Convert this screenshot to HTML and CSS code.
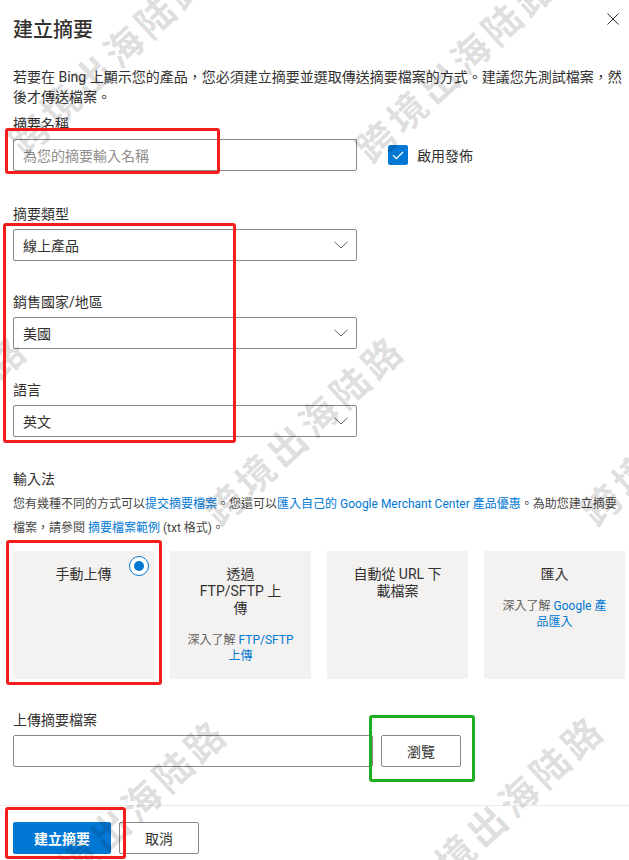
FILE: index.html
```html
<!DOCTYPE html>
<html lang="zh-Hant">
<head>
<meta charset="utf-8">
<title>建立摘要</title>
<link rel="stylesheet" href="styles.css">
</head>
<body>
<div class="dialog">
  <div class="content">
    <header class="header">
      <h1 class="title">建立摘要</h1>
      <button class="close" aria-label="關閉">
        <svg width="12" height="12" viewBox="0 0 12 12"><path d="M0.5 0.5 L11.5 11.5 M11.5 0.5 L0.5 11.5" stroke="#323130" stroke-width="1" fill="none"/></svg>
      </button>
    </header>

    <p class="intro">若要在 Bing 上顯示您的產品，您必須建立摘要並選取傳送摘要檔案的方式。建議您先測試檔案，然後才傳送檔案。</p>

    <div class="field field-name">
      <span class="label">摘要名稱</span>
      <div class="name-row">
        <div class="input name-input"><span class="placeholder">為您的摘要輸入名稱</span></div>
        <div class="check">
          <span class="checkbox"><svg width="20" height="20" viewBox="0 0 20 20"><path d="M5 10.2 L8.4 13.6 L15 7" stroke="#fff" stroke-width="1.3" fill="none"/></svg></span>
          <span class="check-text">啟用發佈</span>
        </div>
      </div>
    </div>

    <div class="field field-first">
      <span class="label">摘要類型</span>
      <div class="input select"><span>線上產品</span><svg class="chev" width="14" height="8" viewBox="0 0 14 8"><path d="M0.5 0.8 L7 7 L13.5 0.8" stroke="#605e5c" stroke-width="1" fill="none"/></svg></div>
    </div>

    <div class="field field-next">
      <span class="label">銷售國家/地區</span>
      <div class="input select"><span>美國</span><svg class="chev" width="14" height="8" viewBox="0 0 14 8"><path d="M0.5 0.8 L7 7 L13.5 0.8" stroke="#605e5c" stroke-width="1" fill="none"/></svg></div>
    </div>

    <div class="field field-next">
      <span class="label">語言</span>
      <div class="input select"><span>英文</span><svg class="chev" width="14" height="8" viewBox="0 0 14 8"><path d="M0.5 0.8 L7 7 L13.5 0.8" stroke="#605e5c" stroke-width="1" fill="none"/></svg></div>
    </div>

    <div class="field field-method">
      <span class="label label-method">輸入法</span>
      <p class="method-desc">您有幾種不同的方式可以<a href="#">提交摘要檔案</a>。您還可以<a href="#">匯入自己的 Google Merchant Center 產品優惠</a>。為助您建立摘要檔案，請參閱 <a href="#">摘要檔案範例</a> (txt 格式)。</p>
      <div class="cards">
        <div class="card">
          <div class="card-title">手動上傳</div>
          <span class="radio"><span class="radio-dot"></span></span>
        </div>
        <div class="card">
          <div class="card-title">透過<br>FTP/SFTP 上<br>傳</div>
          <div class="card-link">深入了解 <a href="#">FTP/SFTP<br>上傳</a></div>
        </div>
        <div class="card">
          <div class="card-title">自動從 URL 下<br>載檔案</div>
        </div>
        <div class="card">
          <div class="card-title">匯入</div>
          <div class="card-link">深入了解 <a href="#">Google 產<br>品匯入</a></div>
        </div>
      </div>
    </div>

    <div class="field field-upload">
      <span class="label">上傳摘要檔案</span>
      <div class="upload-row">
        <div class="input upload-input"></div>
        <button class="btn">瀏覽</button>
      </div>
    </div>
  </div>

  <footer class="footer">
    <button class="btn btn-primary">建立摘要</button>
    <button class="btn">取消</button>
  </footer>

  <div class="watermarks" aria-hidden="true">
    <span class="wm wm-1">跨境出海陆路</span>
    <span class="wm wm-2">跨境出海陆路</span>
    <span class="wm wm-3">跨境出海陆路</span>
    <span class="wm wm-4">跨境出海陆路</span>
    <span class="wm wm-5">跨境出海陆路</span>
    <span class="wm wm-6">跨境出海陆路</span>
    <span class="wm wm-7">跨境出海陆路</span>
  </div>

  <div class="note note-red note-1"></div>
  <div class="note note-red note-2"></div>
  <div class="note note-red note-3"></div>
  <div class="note note-green note-4"></div>
  <div class="note note-red note-5"></div>
</div>
</body>
</html>
```
FILE: styles.css
```css
* { box-sizing: border-box; }

html, body {
  margin: 0;
  padding: 0;
  background: #ffffff;
}

body {
  font-family: "Segoe UI", Roboto, "Noto Sans CJK TC", sans-serif;
  font-size: 14px;
  color: #323130;
}

.dialog {
  position: relative;
  width: 629px;
  height: 860px;
  overflow: hidden;
  background: #ffffff;
}

.content {
  padding: 0 4px 0 13px;
}

.header {
  display: flex;
  justify-content: space-between;
  align-items: flex-start;
  padding-top: 13px;
}

.title {
  margin: 3px 0 0;
  font-size: 20px;
  line-height: 28px;
  font-weight: 500;
}

.close {
  display: block;
  width: 12px;
  height: 12px;
  margin: 0 6px 0 0;
  padding: 0;
  border: 0;
  background: none;
}

.close svg { display: block; }

.intro {
  margin: 23px -4px 0 0;
  line-height: 20px;
}

.field-name { margin-top: 2px; }
.field-first { margin-top: 28px; }
.field-next { margin-top: 26px; }
.field-method { margin-top: 27px; }
.field-upload { margin-top: 26px; }

.label {
  display: block;
  padding: 5px 0;
  line-height: 20px;
}

.label-method { padding-bottom: 0; }

.input {
  display: flex;
  align-items: center;
  height: 32px;
  padding: 0 8px 0 9px;
  border: 1px solid #8a8886;
  border-radius: 2px;
  background: #ffffff;
}

.placeholder { color: #8f8d8b; }

.name-row {
  display: flex;
  align-items: center;
}

.name-input { width: 344px; }

.check {
  display: flex;
  align-items: center;
  gap: 9px;
  margin-left: 31px;
}

.checkbox {
  display: block;
  width: 20px;
  height: 20px;
  border-radius: 2px;
  background: #0078d4;
}

.checkbox svg { display: block; }

.select {
  width: 344px;
  justify-content: space-between;
}

.chev { display: block; }

.method-desc {
  margin: 3px 0 0;
  font-size: 12px;
  line-height: 24px;
  color: #484644;
}

a {
  color: #0078d4;
  text-decoration: none;
}

.cards {
  display: grid;
  grid-template-columns: repeat(4, 1fr);
  gap: 16px;
  margin-top: 11px;
}

.card {
  position: relative;
  height: 128px;
  padding: 15px 4px 0;
  background: #f3f2f1;
  text-align: center;
}

.card-title {
  line-height: 17px;
  white-space: nowrap;
}

.card-link {
  margin-top: 15px;
  font-size: 12px;
  line-height: 16px;
  color: #605e5c;
  white-space: nowrap;
}

.radio {
  position: absolute;
  top: 5px;
  right: 5px;
  display: flex;
  align-items: center;
  justify-content: center;
  width: 20px;
  height: 20px;
  border: 1.5px solid #0078d4;
  border-radius: 50%;
  background: #ffffff;
}

.radio-dot {
  width: 10px;
  height: 10px;
  border-radius: 50%;
  background: #0078d4;
}

.upload-row {
  display: flex;
  gap: 8px;
}

.upload-input { width: 360px; }

.btn {
  height: 32px;
  min-width: 80px;
  padding: 0 20px;
  border: 1px solid #8a8886;
  border-radius: 2px;
  background: #ffffff;
  color: #323130;
  font-family: inherit;
  font-size: 14px;
}

.btn-primary {
  border-color: #0078d4;
  background: #0078d4;
  color: #ffffff;
  font-weight: 600;
}

.footer {
  display: flex;
  gap: 8px;
  margin-top: 38px;
  padding: 16px 13px;
  border-top: 1px solid #edebe9;
}

/* watermark overlay */
.watermarks {
  position: absolute;
  inset: 0;
  pointer-events: none;
  overflow: hidden;
}

.wm {
  position: absolute;
  transform: translate(-50%, -50%) rotate(-43deg);
  font-family: "Noto Sans CJK SC", sans-serif;
  font-size: 38px;
  font-weight: 700;
  letter-spacing: 5px;
  white-space: nowrap;
  color: rgba(0, 0, 0, 0.13);
}

.wm-1 { left: 108px; top: 58px; }
.wm-2 { left: 455px; top: 65px; }
.wm-3 { left: -74px; top: 428px; }
.wm-4 { left: 303px; top: 428px; }
.wm-5 { left: 680px; top: 428px; }
.wm-6 { left: 126px; top: 812px; }
.wm-7 { left: 503px; top: 808px; }

/* annotation boxes */
.note {
  position: absolute;
  border: 3px solid #f31d1d;
  border-radius: 3px;
  pointer-events: none;
}

.note-green { border-color: #1fae1f; }

.note-1 { left: 5px; top: 128px; width: 215px; height: 46px; }
.note-2 { left: 3px; top: 223px; width: 233px; height: 220px; }
.note-3 { left: 6px; top: 540px; width: 156px; height: 145px; }
.note-4 { left: 369px; top: 715px; width: 106px; height: 67px; }
.note-5 { left: 5px; top: 807px; width: 121px; height: 52px; }
```
